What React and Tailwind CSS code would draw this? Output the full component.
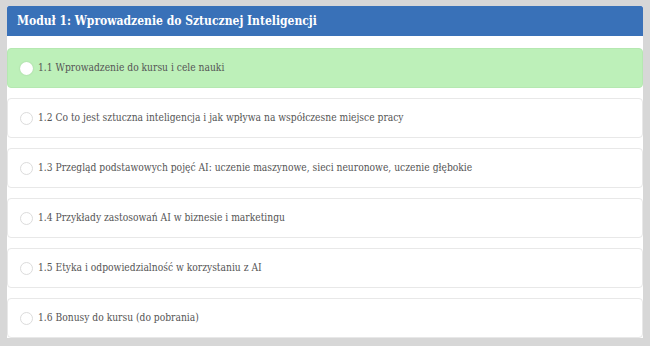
const lessons = [
  { id: '1.1', title: 'Wprowadzenie do kursu i cele nauki', active: true },
  { id: '1.2', title: 'Co to jest sztuczna inteligencja i jak wpływa na współczesne miejsce pracy' },
  { id: '1.3', title: 'Przegląd podstawowych pojęć AI: uczenie maszynowe, sieci neuronowe, uczenie głębokie' },
  { id: '1.4', title: 'Przykłady zastosowań AI w biznesie i marketingu' },
  { id: '1.5', title: 'Etyka i odpowiedzialność w korzystaniu z AI' },
  { id: '1.6', title: 'Bonusy do kursu (do pobrania)' },
];

const LessonRow = ({ lesson }) => (
  <div
    className={`flex h-[40px] items-center rounded-[4px] border pl-[12px] ${
      lesson.active
        ? 'border-[#b5e8b1] bg-[#bdf0b9]'
        : 'border-[#e8e8e8] bg-white'
    }`}
  >
    <span
      className={`h-[13px] w-[13px] shrink-0 rounded-full ${
        lesson.active
          ? 'bg-white shadow-[0_0_2px_rgba(0,0,0,0.15)]'
          : 'border border-[#dcdcdc] bg-white'
      }`}
    />
    <span className="ml-[5px] text-[10.2px] text-[#555]">
      {lesson.id} {lesson.title}
    </span>
  </div>
);

export default function App() {
  return (
    <div
      className="h-[346px] w-[650px] bg-[#d7d7d7] pl-[7px] pr-[7px] pt-[6px] pb-[8px]"
      style={{ fontFamily: '"DejaVu Serif Condensed", "Liberation Serif", serif' }}
    >
      <div className="flex h-full flex-col bg-white">
        <div className="flex h-[30px] items-center rounded-t-[2px] bg-[#3971b8] pl-[10px]">
          <h1 className="text-[12px] font-bold text-white">
            Moduł 1: Wprowadzenie do Sztucznej Inteligencji
          </h1>
        </div>
        <div className="flex flex-col gap-[10px] pt-[12px]">
          {lessons.map((lesson) => (
            <LessonRow key={lesson.id} lesson={lesson} />
          ))}
        </div>
      </div>
    </div>
  );
}
